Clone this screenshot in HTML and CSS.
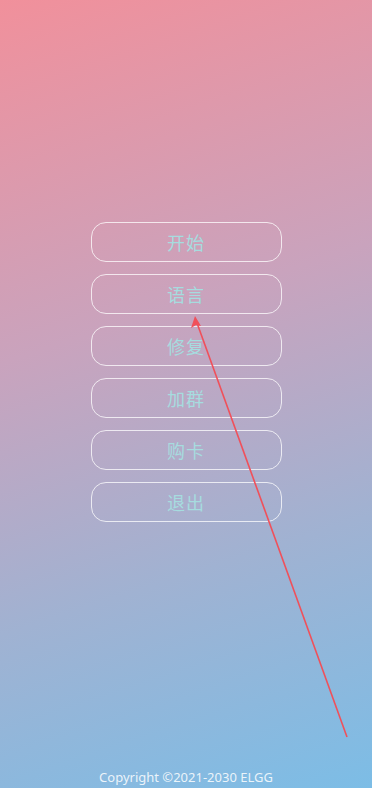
FILE: index.html
```html
<!DOCTYPE html>
<html>
<head>
    <meta charset="utf-8">
    <title>菜单</title>
    <link rel="stylesheet" href="styles.css">
</head>
<body>
    <div class="page">
        <div class="menu">
            <button class="menu-btn">开始</button>
            <button class="menu-btn">语言</button>
            <button class="menu-btn">修复</button>
            <button class="menu-btn">加群</button>
            <button class="menu-btn">购卡</button>
            <button class="menu-btn">退出</button>
        </div>
        <div class="copyright">Copyright ©2021-2030 ELGG</div>

        <!-- pointer annotation -->
        <svg class="pointer" width="372" height="788" viewBox="0 0 372 788">
            <line x1="347" y1="737" x2="197" y2="323" stroke="#f0505a" stroke-width="1.6"/>
            <polygon points="195,316 191,328 196,325 201,326" fill="#f0505a"/>
        </svg>
    </div>
</body>
</html>
```

FILE: styles.css
```css
body {
    margin: 0;
    font-family: "Noto Sans CJK SC", "Noto Sans", sans-serif;
}

.page {
    position: relative;
    width: 372px;
    height: 788px;
    overflow: hidden;
    background: linear-gradient(162deg, #f1909b 0%, #c9a3bd 40%, #a0b2d2 70%, #7cbde6 100%);
    display: flex;
    flex-direction: column;
    align-items: center;
}

.menu {
    margin-top: 222px;
    display: flex;
    flex-direction: column;
    gap: 12px;
}

.menu-btn {
    width: 191px;
    height: 40px;
    background: transparent;
    border: 1px solid rgba(255, 255, 255, 0.75);
    border-radius: 15px;
    color: #a6dcdf;
    font-family: inherit;
    font-size: 18px;
    letter-spacing: 1px;
    padding: 0;
    cursor: pointer;
}

.copyright {
    margin-top: auto;
    margin-bottom: 1px;
    color: rgba(255, 255, 255, 0.85);
    font-family: "Noto Sans", "Noto Sans CJK SC", sans-serif;
    font-size: 13px;
    line-height: 19px;
}

.pointer {
    position: absolute;
    left: 0;
    top: 0;
}
```
